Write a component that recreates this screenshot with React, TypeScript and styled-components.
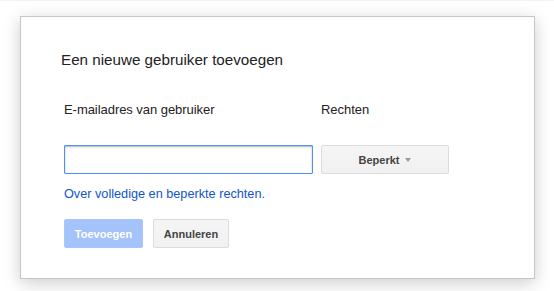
import React from 'react'
import styled, { createGlobalStyle } from 'styled-components'

const GlobalStyle = createGlobalStyle`
  html, body {
    margin: 0;
    padding: 0;
    background: #ffffff;
  }
  body {
    font-family: "Liberation Sans", Arial, sans-serif;
    color: #222;
  }
`;

const Page = styled.div`
  width: 554px;
  height: 291px;
  box-sizing: border-box;
  border-top: 1px solid #f4f4f4;
  padding: 15px 0 0 20px;
`;

const Dialog = styled.div`
  width: 515px;
  height: 263px;
  box-sizing: border-box;
  background: #fff;
  border: 1px solid #c6c6c6;
  box-shadow: 0 4px 16px rgba(0, 0, 0, 0.2);
  padding: 34px 0 0 0;
`;

const Title = styled.div`
  font-size: 15.2px;
  line-height: 18px;
  color: #222;
  padding: 0 40px;
`;

const Body = styled.div`
  padding: 33px 43px 0 43px;
`;

const Row = styled.div`
  display: grid;
  grid-template-columns: 249px 128px;
  column-gap: 8px;
`;

const Label = styled.div`
  font-size: 13px;
  line-height: 15px;
  letter-spacing: -0.05px;
  color: #222;
`;

const TextInput = styled.input`
  box-sizing: border-box;
  width: 249px;
  height: 29px;
  margin: 28px 0 0 0;
  border: 1px solid #4d90fe;
  border-radius: 1px;
  box-shadow: inset 0 1px 2px rgba(0, 0, 0, 0.3);
  outline: none;
  padding: 0 8px;
  font: 13px "Liberation Sans", Arial, sans-serif;
`;

const Dropdown = styled.div`
  box-sizing: border-box;
  height: 29px;
  margin-top: 28px;
  display: flex;
  align-items: center;
  justify-content: center;
  gap: 6px;
  background: linear-gradient(#f5f5f5, #f1f1f1);
  border: 1px solid #dcdcdc;
  border-radius: 2px;
  font-size: 11px;
  font-weight: bold;
  color: #444;
`;

const Arrow = styled.span`
  width: 0;
  height: 0;
  border-left: 3.5px solid transparent;
  border-right: 3.5px solid transparent;
  border-top: 4px solid #999;
  margin-top: 1px;
`;

const Link = styled.a`
  display: block;
  margin-top: 13px;
  font-size: 12.7px;
  line-height: 15px;
  color: #15c;
  text-decoration: none;
`;

const Actions = styled.div`
  display: flex;
  gap: 10px;
  margin-top: 17px;
`;

const Button = styled.div<{ $primary?: boolean }>`
  box-sizing: border-box;
  height: 29px;
  padding: 0 8px;
  min-width: 54px;
  display: flex;
  align-items: center;
  justify-content: center;
  border-radius: 2px;
  font-size: 11px;
  font-weight: bold;
  border: 1px solid ${p => (p.$primary ? '#a8c6f8' : '#dcdcdc')};
  background: ${p => (p.$primary ? '#a3c3fa' : 'linear-gradient(#f5f5f5, #f1f1f1)')};
  color: ${p => (p.$primary ? '#fff' : '#444')};
`;

export default function App() {
  return (
    <Page>
      <GlobalStyle />
      <Dialog>
        <Title>Een nieuwe gebruiker toevoegen</Title>
        <Body>
          <Row>
            <Label>E-mailadres van gebruiker</Label>
            <Label>Rechten</Label>
          </Row>
          <Row>
            <TextInput type="text" />
            <Dropdown>
              Beperkt
              <Arrow />
            </Dropdown>
          </Row>
          <Link href="#">Over volledige en beperkte rechten.</Link>
          <Actions>
            <Button $primary style={{ width: 79 }}>Toevoegen</Button>
            <Button style={{ width: 76 }}>Annuleren</Button>
          </Actions>
        </Body>
      </Dialog>
    </Page>
  );
}
